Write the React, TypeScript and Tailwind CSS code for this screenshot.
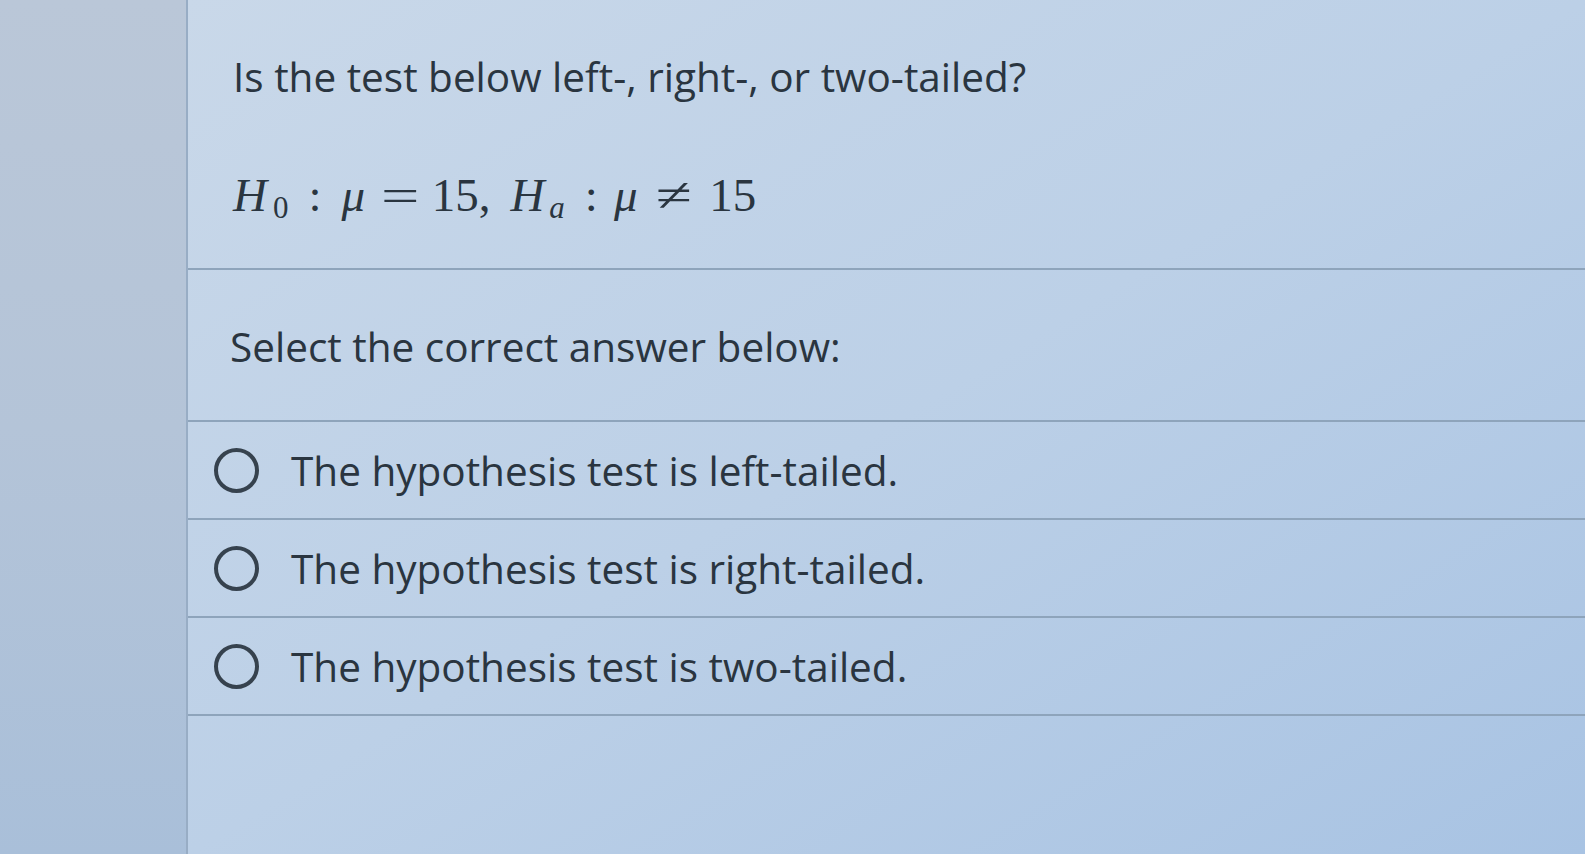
import React from "react";

const Radio = () => (
  <span className="inline-block w-[45px] h-[45px] rounded-full border-[4px] border-[#36424e] shrink-0" />
);

const options = [
  "The hypothesis test is left-tailed.",
  "The hypothesis test is right-tailed.",
  "The hypothesis test is two-tailed.",
];

export default function App() {
  return (
    <div className="w-[1585px] h-[854px] flex overflow-hidden" style={{ fontFamily: '"Open Sans", "Noto Sans", sans-serif' }}>
      <div className="w-[188px] shrink-0 border-r-2 border-[#98adc5] bg-gradient-to-b from-[#bac7d8] via-[#b4c4d8] to-[#a9bfd9]" />
      <div className="flex-1 flex flex-col bg-gradient-to-br from-[#c9d8e9] via-[#bcd0e7] to-[#a8c3e3] text-[#2a3540]">
        <div className="pl-[45px] pt-[40px] h-[270px] border-b-2 border-[#8ea4bb]">
          <div className="text-[40.5px] leading-[74px]">Is the test below left-, right-, or two-tailed?</div>
          <div className="mt-[56px] text-[47px] leading-[50px] flex items-baseline" style={{ fontFamily: '"Liberation Serif", "DejaVu Serif", serif' }}>
            <i className="tracking-[1px]">H</i><span className="text-[31px] relative top-[7px] ml-[5px]">0</span>
            <span className="ml-[20px] mr-[20px]">:</span>
            <i>μ</i>
            <span className="ml-[22px] mr-[18px] inline-block scale-x-[1.45]">=</span>
            <span>15,</span>
            <span className="ml-[20px]"><i>H</i></span><i className="text-[31px] relative top-[7px] ml-[5px]">a</i>
            <span className="ml-[20px] mr-[16px]">:</span>
            <i>μ</i>
            <span className="ml-[24px] mr-[22px] inline-block scale-x-[1.4]">≠</span>
            <span>15</span>
          </div>
        </div>
        <div className="h-[152px] border-b-2 border-[#8ea4bb] pl-[42px] flex items-center">
          <div className="text-[40.5px] pt-[4px]">Select the correct answer below:</div>
        </div>
        {options.map((o) => (
          <div key={o} className="h-[98px] border-b-2 border-[#8ea4bb] pl-[26px] flex items-center gap-[32px]">
            <Radio />
            <div className="text-[40.5px] pt-[2px]">{o}</div>
          </div>
        ))}
        <div className="flex-1" />
      </div>
    </div>
  );
}
